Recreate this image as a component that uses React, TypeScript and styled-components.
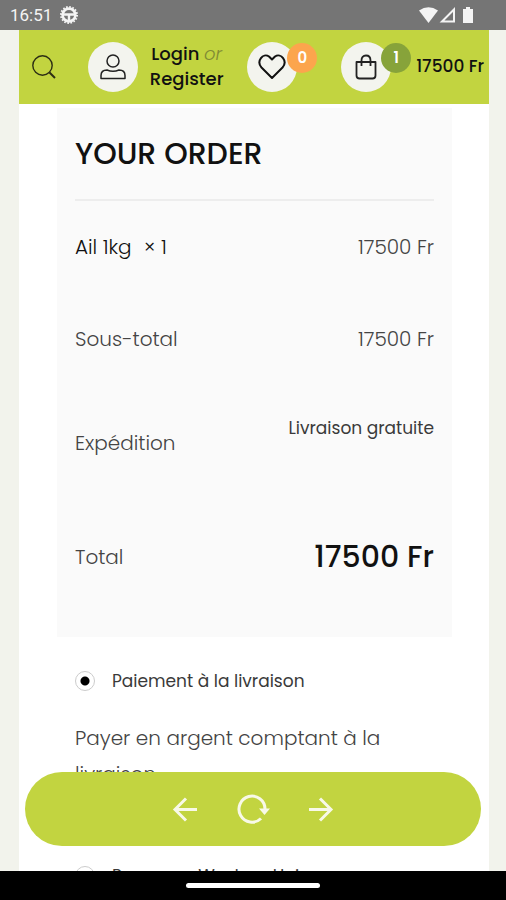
import React from "react";
import styled, { createGlobalStyle } from "styled-components";

const lime = "#c2d440";

const GlobalStyle = createGlobalStyle`
  * { box-sizing: border-box; }
  body {
    margin: 0;
    background: #f2f3ec;
    font-family: Poppins, Inter, "Open Sans", sans-serif;
    color: #111;
  }
  button { font: inherit; color: inherit; border: 0; padding: 0; background: none; cursor: pointer; }
  a { color: inherit; text-decoration: none; }
  svg { display: block; }
`;

const Screen = styled.div`
  height: 100vh;
  display: flex;
  flex-direction: column;
  position: relative;
  overflow: hidden;
`;

const StatusBar = styled.div`
  flex: none;
  height: 30px;
  padding: 0 32px 0 10px;
  display: flex;
  align-items: center;
  justify-content: space-between;
  background: #757575;
  color: #f4f4f4;
  font: 400 17px/30px Roboto, sans-serif;
`;

const StatusGroup = styled.div<{ $gap: number }>`
  display: flex;
  align-items: center;
  gap: ${(p) => p.$gap}px;
`;

const Page = styled.div`
  flex: 1;
  min-height: 0;
  margin: 0 17px 0 19px;
  overflow: hidden;
  background: #fff;
`;

const Header = styled.header`
  height: 74px;
  padding: 0 5px 0 13px;
  display: flex;
  align-items: center;
  justify-content: space-between;
  background: ${lime};
  font-weight: 500;
`;

const SearchButton = styled.button`
  width: 32px;
`;

const Account = styled.div`
  display: flex;
  align-items: center;
  gap: 12px;
`;

const Circle = styled.span`
  width: 50px;
  height: 50px;
  display: flex;
  align-items: center;
  justify-content: center;
  border-radius: 50%;
  background: #f3f4ee;
`;

const AccountLinks = styled.div`
  padding-bottom: 2px;
  text-align: center;
  font-size: 18px;
  line-height: 25px;
`;

const Or = styled.em`
  font-weight: 300;
  color: #7f8a34;
`;

const BadgeButton = styled.button`
  position: relative;
  width: 70px;
  text-align: left;
`;

const Badge = styled.span<{ $color: string }>`
  position: absolute;
  top: 1px;
  right: 0;
  width: 30px;
  height: 30px;
  border-radius: 50%;
  background: ${(p) => p.$color};
  color: #fff;
  font-size: 15px;
  font-weight: 600;
  line-height: 30px;
  text-align: center;
`;

const Cart = styled.div`
  display: flex;
  align-items: center;
  gap: 5px;
  font-size: 17px;
  white-space: nowrap;
`;

const CartTotal = styled.span`
  padding-bottom: 2px;
`;

const Order = styled.section`
  margin: 4px 37px 0 38px;
  padding: 26px 18px 24px;
  background: #fafafa;
`;

const Title = styled.h2`
  margin: 0;
  padding-bottom: 26px;
  border-bottom: 2px solid #ededed;
  font-size: 30px;
  font-weight: 500;
  line-height: 39px;
`;

const Table = styled.table`
  width: 100%;
  border-collapse: collapse;
  font-size: 20px;
  line-height: 30px;
`;

const Row = styled.tr<{ $height: number }>`
  height: ${(p) => p.$height}px;
`;

const Label = styled.th<{ $dark?: boolean }>`
  padding: 0;
  text-align: left;
  font-weight: 300;
  color: ${(p) => (p.$dark ? "#111" : "#444")};
`;

const amountStyles = {
  regular: { size: 20, weight: 300, color: "#444", lift: 0 },
  shipping: { size: 17, weight: 400, color: "#3a3a3a", lift: 30 },
  total: { size: 30, weight: 500, color: "#111", lift: 0 },
};

const Amount = styled.td<{ $kind: keyof typeof amountStyles }>`
  padding: 0 0 ${(p) => amountStyles[p.$kind].lift}px;
  text-align: right;
  font-size: ${(p) => amountStyles[p.$kind].size}px;
  font-weight: ${(p) => amountStyles[p.$kind].weight};
  color: ${(p) => amountStyles[p.$kind].color};
`;

const Quantity = styled.span`
  margin-left: 12px;
`;

const Payment = styled.form`
  padding: 28px 55px 0 56px;
`;

const Option = styled.label`
  display: flex;
  align-items: center;
  gap: 17px;
  height: 32px;
  font-size: 17px;
  font-weight: 400;
  color: #3a3a3a;
`;

const Radio = styled.input`
  appearance: none;
  flex: none;
  width: 20px;
  height: 20px;
  margin: 0;
  border: 1px solid #ccc;
  border-radius: 50%;
  background: #fff;
  &:checked {
    background: radial-gradient(circle, #000 4px, #fff 5px);
  }
`;

const Description = styled.p`
  margin: 0;
  padding: 23px 0 68px;
  font-size: 20px;
  font-weight: 300;
  line-height: 36px;
  color: #444;
`;

const BrowserBar = styled.nav`
  position: absolute;
  left: 25px;
  right: 25px;
  bottom: 54px;
  height: 74px;
  display: flex;
  align-items: center;
  justify-content: center;
  gap: 34px;
  border-radius: 37px;
  background: ${lime};
  color: #f8f9e8;
`;

const HomeBar = styled.div`
  flex: none;
  height: 29px;
  display: flex;
  align-items: center;
  justify-content: center;
  background: #000;
`;

const Handle = styled.div`
  width: 134px;
  height: 5px;
  border-radius: 3px;
  background: #fff;
`;

const Arrow = ({ back }: { back?: boolean }) => (
  <svg width="34" height="34" viewBox="0 0 34 34" fill="none" stroke="currentColor" strokeWidth="3">
    <path d={back ? "M29 17.5H7M18 6.5L7 17.5L18 28.5" : "M5 17.5H27M16 6.5L27 17.5L16 28.5"} />
  </svg>
);

export default function App() {
  return (
    <Screen>
      <GlobalStyle />
      <StatusBar>
        <StatusGroup $gap={8}>
          <span>16:51</span>
          <svg width="18" height="18" viewBox="0 0 18 18" fill="none" stroke="currentColor">
            <circle cx="9" cy="9" r="8" strokeWidth="2" strokeDasharray="1.6 1.54" />
            <circle cx="9" cy="9" r="6.4" strokeWidth="2.6" />
            <path d="M3 8.5H15M9 8.5V15" strokeWidth="2.4" />
          </svg>
        </StatusGroup>
        <StatusGroup $gap={1}>
          <svg width="19" height="16" viewBox="0 0 19 16" fill="currentColor">
            <path d="M0 3.5Q9.5 -3 19 3.5L9.5 16Z" />
          </svg>
          <svg width="19" height="16" viewBox="0 0 19 16" fill="none" stroke="currentColor" strokeWidth="2">
            <path d="M15 2.5V14.5H3Z" />
          </svg>
          <svg width="15" height="18" viewBox="0 0 15 18" fill="currentColor">
            <path d="M7 1H11V3H14V17H4V3H7Z" />
          </svg>
        </StatusGroup>
      </StatusBar>

      <Page>
        <Header>
          <SearchButton aria-label="Rechercher">
            <svg width="24" height="24" viewBox="0 0 24 24" fill="none" stroke="#2c2e14" strokeWidth="1.4">
              <circle cx="10.5" cy="10.5" r="9.7" />
              <path d="M17.5 17.5L23 23" strokeWidth="2" />
            </svg>
          </SearchButton>
          <Account>
            <Circle>
              <svg width="26" height="26" viewBox="0 0 26 26" fill="none" stroke="#222" strokeWidth="1.5">
                <circle cx="13" cy="7" r="6" />
                <path d="M1 24.5V21.5Q1 16 7 16Q13 18.5 19 16Q25 16 25 21.5V24.5Z" strokeLinejoin="round" />
              </svg>
            </Circle>
            <AccountLinks>
              <a href="#login">Login</a> <Or>or</Or>
              <br />
              <a href="#register">Register</a>
            </AccountLinks>
          </Account>
          <BadgeButton aria-label="Favoris">
            <Circle>
              <svg width="28" height="26" viewBox="0 0 28 26" fill="none" stroke="#111" strokeWidth="2">
                <path d="M14 24L3.5 13.5C-2 7 5-1.5 11 2.5L14 5.5L17 2.5C23-1.5 30 7 24.5 13.5Z" strokeLinejoin="round" />
              </svg>
            </Circle>
            <Badge $color="#fca54d">0</Badge>
          </BadgeButton>
          <Cart>
            <BadgeButton aria-label="Panier">
              <Circle>
                <svg width="22" height="26" viewBox="0 0 22 26" fill="none" stroke="#222" strokeWidth="1.8">
                  <path d="M1.5 8H20.5V21.5Q20.5 24.5 17.5 24.5H4.5Q1.5 24.5 1.5 21.5Z" strokeLinejoin="round" />
                  <path d="M6.5 12V6.5Q6.5 1.5 11 1.5T15.5 6.5V12" />
                </svg>
              </Circle>
              <Badge $color="#87a33a">1</Badge>
            </BadgeButton>
            <CartTotal>17500 Fr</CartTotal>
          </Cart>
        </Header>

        <Order>
          <Title>YOUR ORDER</Title>
          <Table>
            <tbody>
              <Row $height={92}>
                <Label scope="row" $dark>
                  Ail 1kg<Quantity>× 1</Quantity>
                </Label>
                <Amount $kind="regular">17500 Fr</Amount>
              </Row>
              <Row $height={92}>
                <Label scope="row">Sous-total</Label>
                <Amount $kind="regular">17500 Fr</Amount>
              </Row>
              <Row $height={116}>
                <Label scope="row">Expédition</Label>
                <Amount $kind="shipping">Livraison gratuite</Amount>
              </Row>
              <Row $height={112}>
                <Label scope="row">Total</Label>
                <Amount $kind="total">17500 Fr</Amount>
              </Row>
            </tbody>
          </Table>
        </Order>

        <Payment>
          <Option>
            <Radio type="radio" name="payment" defaultChecked />
            Paiement à la livraison
          </Option>
          <Description>Payer en argent comptant à la livraison.</Description>
          <Option>
            <Radio type="radio" name="payment" />
            Payer par Western Union
          </Option>
        </Payment>
      </Page>

      <BrowserBar>
        <button aria-label="Page précédente"><Arrow back /></button>
        <button aria-label="Actualiser">
          <svg width="34" height="34" viewBox="0 0 34 34" fill="none" stroke="currentColor" strokeWidth="3">
            <path d="M25 26.5A13 13 0 1 1 29 17" />
            <path d="M23 16.5H34L28.5 23Z" fill="currentColor" stroke="none" />
          </svg>
        </button>
        <button aria-label="Page suivante"><Arrow /></button>
      </BrowserBar>
      <HomeBar><Handle /></HomeBar>
    </Screen>
  );
}
